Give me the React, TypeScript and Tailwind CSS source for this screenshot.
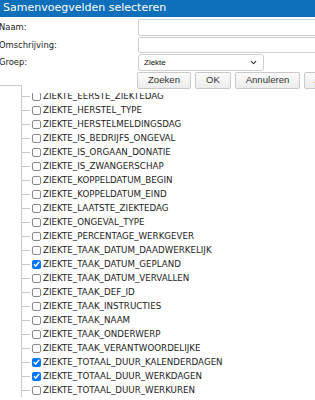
import { ChevronDown } from "lucide-react";

const fields = [
  { name: "ZIEKTE_EERSTE_ZIEKTEDAG", checked: false },
  { name: "ZIEKTE_HERSTEL_TYPE", checked: false },
  { name: "ZIEKTE_HERSTELMELDINGSDAG", checked: false },
  { name: "ZIEKTE_IS_BEDRIJFS_ONGEVAL", checked: false },
  { name: "ZIEKTE_IS_ORGAAN_DONATIE", checked: false },
  { name: "ZIEKTE_IS_ZWANGERSCHAP", checked: false },
  { name: "ZIEKTE_KOPPELDATUM_BEGIN", checked: false },
  { name: "ZIEKTE_KOPPELDATUM_EIND", checked: false },
  { name: "ZIEKTE_LAATSTE_ZIEKTEDAG", checked: false },
  { name: "ZIEKTE_ONGEVAL_TYPE", checked: false },
  { name: "ZIEKTE_PERCENTAGE_WERKGEVER", checked: false },
  { name: "ZIEKTE_TAAK_DATUM_DAADWERKELIJK", checked: false },
  { name: "ZIEKTE_TAAK_DATUM_GEPLAND", checked: true },
  { name: "ZIEKTE_TAAK_DATUM_VERVALLEN", checked: false },
  { name: "ZIEKTE_TAAK_DEF_ID", checked: false },
  { name: "ZIEKTE_TAAK_INSTRUCTIES", checked: false },
  { name: "ZIEKTE_TAAK_NAAM", checked: false },
  { name: "ZIEKTE_TAAK_ONDERWERP", checked: false },
  { name: "ZIEKTE_TAAK_VERANTWOORDELIJKE", checked: false },
  { name: "ZIEKTE_TOTAAL_DUUR_KALENDERDAGEN", checked: true },
  { name: "ZIEKTE_TOTAAL_DUUR_WERKDAGEN", checked: true },
  { name: "ZIEKTE_TOTAAL_DUUR_WERKUREN", checked: false },
];

const Check = ({ checked }: { checked: boolean }) =>
  checked ? (
    <span className="ml-px flex h-[9px] w-[9px] shrink-0 items-center justify-center rounded-[2px] bg-[#0075ff]">
      <svg width="7" height="6" viewBox="0 0 7 6" fill="none">
        <path d="M0.8 3.2 L2.7 5 L6.2 0.8" stroke="white" strokeWidth="1.5" />
      </svg>
    </span>
  ) : (
    <span className="ml-px h-[9px] w-[9px] shrink-0 rounded-[2px] border border-[#8a8a8a] bg-white" />
  );

const buttons = [
  { label: "Zoeken", w: "w-[54px]" },
  { label: "OK", w: "w-[36px]" },
  { label: "Annuleren", w: "w-[65px]" },
  { label: "Alles", w: "w-[42px]" },
];

export default function App() {
  return (
    <div className="h-[400px] w-[315px] overflow-hidden bg-white font-['DejaVu_Sans',sans-serif] text-[#222]">
      {/* Title bar */}
      <div className="h-[17px] whitespace-nowrap bg-[#0e6fba] pl-[3px] text-[11px] leading-[16px] text-white">
        Samenvoegvelden selecteren
      </div>

      {/* Search form */}
      <div className="flex flex-col pt-[2px] text-[8.4px]">
        <div className="flex h-[17px] items-center">
          <label className="-ml-px w-[139px] shrink-0">Naam:</label>
          <div className="h-[17px] w-[200px] shrink-0 rounded-[2px] border border-[#cfcfcf] bg-white" />
        </div>
        <div className="mt-px flex h-[16px] items-center">
          <label className="-ml-px w-[139px] shrink-0">Omschrijving:</label>
          <div className="h-[16px] w-[200px] shrink-0 rounded-[2px] border border-[#cfcfcf] bg-white" />
        </div>
        <div className="mt-px flex h-[17px] items-center">
          <label className="-ml-px w-[139px] shrink-0">Groep:</label>
          <div className="flex h-[17px] w-[126px] shrink-0 items-center justify-between rounded-[3px] border border-[#cfcfcf] bg-white pl-[5px] pr-[5px] font-['Liberation_Sans',sans-serif] text-[8px] text-[#111]">
            <span>Ziekte</span>
            <ChevronDown className="h-[9px] w-[9px] text-[#333]" strokeWidth={3} />
          </div>
        </div>
        <div className="mt-px flex h-[17px]">
          <div className="w-[137px] shrink-0">
            <div className="mt-[13px] h-[4px] w-[22px] border-r border-t border-[#c8c8c8]" />
          </div>
          <div className="flex shrink-0 gap-[4px] font-['Liberation_Sans',sans-serif] text-[9.6px] text-[#333]">
            {buttons.map((b) => (
              <button
                key={b.label}
                className={`h-[17px] shrink-0 whitespace-nowrap rounded-[2px] border border-[#c9c9c9] bg-gradient-to-b from-[#fbfbfb] to-[#ececec] ${b.w}`}
              >
                {b.label}
              </button>
            ))}
          </div>
        </div>
      </div>

      {/* Field tree */}
      <div className="ml-[21px] h-[4px] border-l border-[#c8c8c8]" />
      <div className="h-[307px] overflow-hidden">
        <div className="-mt-[4px] flex flex-col">
          {fields.map((f) => (
            <div key={f.name} className="flex h-[14px] items-center whitespace-nowrap">
              <div className="w-[21px] shrink-0" />
              <div className="flex w-[10px] shrink-0 items-center self-stretch border-l border-[#c8c8c8]">
                <div className="h-px w-[8px] bg-[#c8c8c8]" />
              </div>
              <Check checked={f.checked} />
              <span className="ml-[2px] text-[8.7px] leading-[14px]">{f.name}</span>
            </div>
          ))}
        </div>
      </div>
    </div>
  );
}
